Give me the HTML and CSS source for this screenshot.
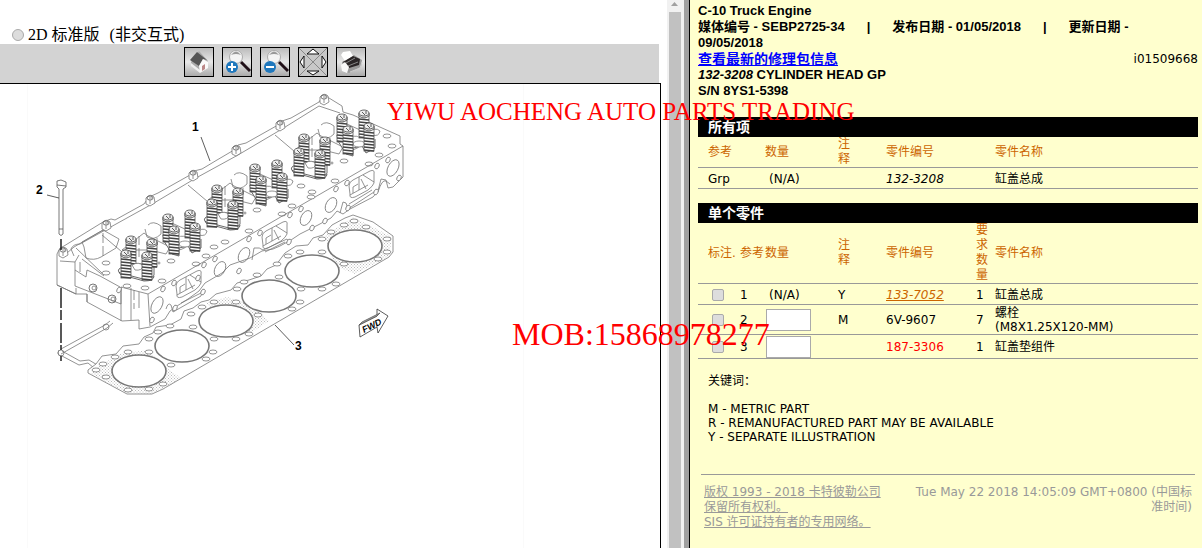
FILE: index.html
```
<!DOCTYPE html>
<html lang="zh-CN">
<head>
<meta charset="utf-8">
<title>132-3208 CYLINDER HEAD GP</title>
<link rel="stylesheet" href="styles.css">
</head>
<body>
<div class="frames">
<main class="viewer">
  <label class="mode"><input type="radio" name="mode"> <span>2D 标准版</span><span class="mode-note">(非交互式)</span></label>
  <div class="toolbar">
    <button aria-label="主页"><svg viewBox="0 0 28 28"><path d="M6 14L14 3L23 13L15 24L6 17Z" fill="#aaa"/><path d="M6 15L15 22L15 25L6 18Z" fill="#eee"/><path d="M12 4L22 12L18 11L14 18L5 12Z" fill="#555"/><path d="M14 18L18 11L23 14V20L15 25Z" fill="#fafafa"/><path d="M17 18L20 16V21L17 23Z" fill="#b88"/></svg></button>
    <button aria-label="放大"><svg viewBox="0 0 28 28"><circle cx="13" cy="9" r="6.5" fill="#f4f4f4" stroke="#aaa"/><path d="M8 7Q13 0 18 7Q13 5 8 7" fill="#999"/><path d="M18 14L27 23" stroke="#201018" stroke-width="3"/><circle cx="9" cy="19" r="6" fill="#1f78bd"/><path d="M5 19H13M9 15V23" stroke="#fff" stroke-width="2"/></svg></button>
    <button aria-label="缩小"><svg viewBox="0 0 28 28"><circle cx="13" cy="9" r="6.5" fill="#f4f4f4" stroke="#aaa"/><path d="M8 7Q13 0 18 7Q13 5 8 7" fill="#999"/><path d="M18 14L27 23" stroke="#201018" stroke-width="3"/><circle cx="9" cy="19" r="6" fill="#1f78bd"/><path d="M5 19H13" stroke="#fff" stroke-width="2"/></svg></button>
    <button class="pan" aria-label="平移"><svg viewBox="0 0 28 28"><path d="M0 0L28 28M28 0L0 28" stroke="#888"/><path d="M14 1L20 6H8ZM14 27L20 23H8ZM1 14L5 8V20ZM27 14L23 8V20Z" fill="#fff" stroke="#111"/></svg></button>
    <button aria-label="打印"><svg viewBox="0 0 28 28"><path d="M5 14L17 7L25 12L24 19L12 25L5 22Z" fill="#999"/><path d="M4 7L6 4L13 3L16 8L8 13Z" fill="#fff"/><path d="M6 14L16 8L23 11L22 17L12 20Z" fill="#2a2526"/><path d="M9 15L18 10M11 18L21 14" stroke="#888"/><path d="M4 17L8 14L12 19L10 25L5 23Z" fill="#f8f8f8"/><path d="M13 24L23 20L25 14" fill="none" stroke="#ccc"/></svg></button>
  </div>
  <div class="drawing">
    <svg class="figure" viewBox="0 84 660 464" width="660" height="464" fill="none" stroke="#777" stroke-width=".8">
      <defs>
        <g id="spring">
          <rect x="-5" y="2" width="10" height="24" fill="#fff" stroke="#555"/>
          <path d="M-5 7L5 8M-5 10L5 11M-5 13L5 14M-5 16L5 17M-5 19L5 20M-5 22L5 23M-5 25L5 26" stroke="#444" stroke-width="1.4"/>
          <path d="M-5 1V4Q0 8 5 4V1" fill="#ddd" stroke="#444"/>
          <ellipse cy="1" rx="5" ry="3" fill="#eee" stroke="#444"/>
          <path d="M-2 0L1 3M2-1V2" stroke="#333"/>
        </g>
        <g id="set-a">
          <path d="M-7 17Q-9 19-6 21L17 27Q27 27 28 23V15L16 12L2 11Z" fill="#fff" stroke="#444"/>
          <path d="M-7 20Q-6 24 0 24L18 29Q28 29 28 24" stroke="#444"/>
          <use href="#spring" x="5" y="-14"/><use href="#spring" x="26" y="-11"/>
          <path d="M6 13Q13 9 17 14Q16 19 9 18Z" fill="#fff"/>
          <use href="#spring"/><use href="#spring" x="21" y="2"/>
        </g>
        <g id="set-b">
          <path d="M-11 7L-10 13L-2 26L5 28V20L14 18L18 25L27 20V11" fill="#fff" stroke="#444"/>
          <use href="#spring" x="-6" y="-12"/><use href="#spring" x="16" y="-16"/>
          <ellipse cx="11" cy="16" rx="6" ry="3" fill="#fff"/>
          <use href="#spring"/><use href="#spring" x="21" y="-3"/>
        </g>
        <g id="boss">
          <path d="M-4 5L-4-1Q0-6 4-2L5 4L0 7Z" fill="#fff"/><ellipse cy="-1" rx="3" ry="2" stroke="#555"/><path d="M-1-1H2M0 1V5"/>
        </g>
        <g id="bay">
          <path d="M18 17L40 0L44 3L66 14L62 21L46 17Z"/>
          <path d="M35 3V26" stroke-dasharray="9 3"/>
          <path d="M63-14V6" stroke-dasharray="7 3"/>
          <path d="M-2 2L24 24M61-13L92 1Q98-7 103-2Q102 4 95 2"/>
          <path d="M41-4L43 4Q50 8 57 1V-7Q49-13 44-8M47 6V12Q50 15 53 12V5"/>
          <path d="M72 8Q76 0 83 5L87 15M69 12Q78 6 84 12Q77 19 70 16Z"/>
          <ellipse cx="40" cy="35" rx="4" ry="2"/><ellipse cx="92" cy="31" rx="4" ry="2"/><circle cx="55" cy="30" r="1"/>
        </g>
        <g id="port">
          <path d="M-13 1Q-13-3-9-5L8-14Q13-16 12-11L12-2Q11 1 6 5L-7 12Q-13 14-12 9Z"/><path d="M-12 10L-3 5V-8M12-3L1-10M-3 5L6 0M-4-1L-9 2V8M-1-6L4 4"/>
        </g>
        <pattern id="dots" width="3" height="3" patternUnits="userSpaceOnUse"><path d="M0 .5H1M1.500 2H2.500" stroke="#aaa"/></pattern>
      </defs>
      <path class="faint" d="M27.500 84V548M523.500 84V548"/>
      <!-- head gasket -->
      <path d="M61 349L105 325L110 321M61 354L107 328L113 323M59 350Q56 355 62 356L79 365L88 363L94 368M62 351L80 361L89 360L99 366" fill="none"/>
      <circle cx="106" cy="327" r="3"/><circle cx="61" cy="353" r="3"/>
      <path d="M88 370L96 364L102 356L116 354L123 346L139 344L144 337L153 333L156 327L170 325L181 319L184 311L193 308L201 302L209 300L216 294L231 290L237 283L249 280L261 276L267 269L276 265L285 253L296 246L308 245L313 238L323 235L332 225L345 218L353 215L373 222L393 236V252L389 257L163 389L152 394H127L88 373Z" fill="#fff"/>
      <path d="M95 368L120 354L148 350L168 369L181 378L165 389L150 394L127 393L91 374Z" fill="url(#dots)" stroke="none"/>
      <path d="M205 303L227 297L250 304L269 321L251 333L205 303M325 236L353 217L392 237L389 256L355 274L335 266Z" fill="url(#dots)" stroke="none"/>
      <g class="bores">
        <ellipse cx="139" cy="371" rx="27" ry="16"/><ellipse cx="182" cy="346" rx="27" ry="16"/><ellipse cx="226" cy="321" rx="27" ry="16"/><ellipse cx="269" cy="296" rx="27" ry="16"/><ellipse cx="312" cy="271" rx="27" ry="16"/><ellipse cx="355" cy="246" rx="27" ry="16"/>
      </g>
      <g id="gasket-holes" fill="#fff"></g>
      <!-- cylinder head casting -->
      <path d="M57 285V254L60 248L64 246L103 222L111 219L115 220L144 204L149 197L158 193L174 184L190 175L194 171L202 169L217 160L234 150L238 145L246 143L278 125L282 121L291 118L319 102L323 96L329 98L342 106L343 112L353 115L400 136V144L403 146V177L393 187L388 188L386 180L381 179L378 191L373 197L350 209L343 214L337 211L331 218L318 225L310 229L300 234L291 240L280 246L273 249L262 251L250 258L230 265L222 273L205 283L199 291L188 299L177 306L170 311L165 319L150 327L139 329V320L122 321L87 302V294L76 294Z" fill="#fff"/>
      <path d="M60 261L75 262L75 286L121 304V287L148 294L403 146M87 294V302M148 294L150 326M121 287V321M131 288V320M139 292V308M75 270L86 277L87 270L100 276L120 287M75 262L79 255M57 285L76 294V288"/>
      <path d="M67 253L74 247L110 226M74 256L71 249Q73 244 80 244L154 203L196 178L238 155L282 129L319 106L340 113M82 259L104 276M76 248L103 274"/>
      <path d="M84 247L86 258Q94 261 101 257L116 248L119 239L103 230L82 242Z"/>
      <path d="M103 233V258M80 262V272M134 290V309" stroke-dasharray="10 3"/>
      <use href="#bay" x="104" y="233"/><use href="#bay" x="190" y="183"/><use href="#bay" x="277" y="133"/>
      <use href="#boss" x="63" y="251"/><use href="#boss" x="106" y="224"/><use href="#boss" x="150" y="199"/><use href="#boss" x="193" y="174"/><use href="#boss" x="236" y="149"/><use href="#boss" x="280" y="124"/><use href="#boss" x="324" y="98"/>
      <use href="#port" x="189" y="285"/><use href="#port" x="275" y="236"/><use href="#port" x="362" y="185"/>
      <g>
        <ellipse cx="157" cy="305" rx="5" ry="9" transform="rotate(28 157 305)"/><ellipse cx="220" cy="269" rx="5" ry="8" transform="rotate(28 220 269)"/><ellipse cx="244" cy="255" rx="5" ry="8" transform="rotate(28 244 255)"/><ellipse cx="306" cy="218" rx="5" ry="8" transform="rotate(28 306 218)"/><ellipse cx="331" cy="205" rx="5" ry="8" transform="rotate(28 331 205)"/><ellipse cx="393" cy="168" rx="5" ry="9" transform="rotate(28 393 168)"/>
        <circle cx="93" cy="288" r="4" stroke="#555"/><circle cx="94" cy="288" r="2"/><circle cx="112" cy="299" r="4" stroke="#555"/><circle cx="113" cy="299" r="2"/>
      </g>
      <path d="M166 309Q168 302 171 305L173 312L201 296L202 291M181 303L201 293M252 260L254 248Q260 247 263 250L287 239L290 243M265 252L285 242M340 213L343 202L346 203L348 209L374 192M349 204L372 190M378 192Q382 179 386 181L390 184"/>
      <g id="head-holes" fill="#fff"></g>
      <use href="#set-b" x="348" y="128"/><use href="#set-a" x="299" y="150"/><use href="#set-b" x="261" y="178"/><use href="#set-a" x="212" y="201"/><use href="#set-b" x="174" y="228"/><use href="#set-a" x="126" y="252"/>
      <!-- bolt -->
      <path d="M57 181L61 180L66 182V187L63 189V234Q61 237 59 234V189L57 187ZM57 185L66 186M59 229H63" fill="#fff" stroke="#555"/>
      <path d="M61 239V250M61 288V320M61 323V350M61 356V361" stroke="#222" stroke-width="1.500" stroke-dasharray="20 2"/>
      <path d="M201 137L210 161M47 195L59 198M275 325L294 345" stroke="#333"/>
      <path d="M359 325L377 316V309L388 316L378 333L377 327L360 337Z" fill="#fff" stroke="#333"/>
      <path d="M359 325L362 322L380 313L377 316Z" fill="#aaa" stroke="#555"/>
      <g class="callouts"><text x="192" y="131">1</text><text x="36" y="194">2</text><text x="295" y="350">3</text><text class="fwd" transform="translate(364 333) rotate(-27)">FWD</text></g>
    </svg>
  </div>
</main>
<div class="scroll"><svg viewBox="0 0 15 12"><path d="M4 6L7.500 2L11 6Z" fill="#a0a0a0"/></svg><div class="thumb"></div></div>
<div class="splitter"></div>
<aside class="details">
  <header class="meta">
    <div>C-10 Truck Engine</div>
    <div class="media"><span>媒体编号 - SEBP2725-34</span><i>|</i><span>发布日期 - 01/05/2018</span><i>|</i><span>更新日期 -</span></div>
    <div>09/05/2018</div>
    <div class="kit"><a href="#">查看最新的修理包信息</a><span>i01509668</span></div>
    <div><em>132-3208</em> CYLINDER HEAD GP</div>
    <div>S/N 8YS1-5398</div>
  </header>
  <h2>所有项</h2>
  <table class="all">
    <colgroup><col class="c-ref-wide"><col class="c-qty"><col class="c-note"><col class="c-part"><col></colgroup>
    <thead><tr><th>参考</th><th>数量</th><th>注<br>释</th><th>零件编号</th><th>零件名称</th></tr></thead>
    <tbody><tr><td>Grp</td><td class="na">(N/A)</td><td></td><td><em>132-3208</em></td><td>缸盖总成</td></tr></tbody>
  </table>
  <h2>单个零件</h2>
  <table class="single">
    <colgroup><col class="c-mark"><col class="c-ref"><col class="c-qty"><col class="c-note"><col class="c-part-short"><col class="c-req"><col></colgroup>
    <thead><tr><th>标注.</th><th>参考</th><th>数量</th><th>注<br>释</th><th>零件编号</th><th>要<br>求<br>数<br>量</th><th>零件名称</th></tr></thead>
    <tbody>
      <tr><td class="pick"><input type="checkbox" aria-label="标注 1"></td><td>1</td><td class="na">(N/A)</td><td>Y</td><td><a class="part" href="#">133-7052</a></td><td>1</td><td>缸盖总成</td></tr>
      <tr><td class="pick"><input type="checkbox" aria-label="标注 2"></td><td>2</td><td><input type="text" aria-label="数量 2"></td><td>M</td><td>6V-9607</td><td>7</td><td>螺栓<br>(M8X1.25X120-MM)</td></tr>
      <tr><td class="pick"><input type="checkbox" aria-label="标注 3"></td><td>3</td><td><input type="text" aria-label="数量 3"></td><td></td><td class="alert">187-3306</td><td>1</td><td>缸盖垫组件</td></tr>
    </tbody>
  </table>
  <section class="keys">
    <p>关键词：</p>
    <div>M - METRIC PART</div><div>R - REMANUFACTURED PART MAY BE AVAILABLE</div><div>Y - SEPARATE ILLUSTRATION</div>
  </section>
  <footer>
    <div><a href="#">版权 1993 - 2018 卡特彼勒公司<br>保留所有权利。</a><br><a href="#">SIS 许可证持有者的专用网络。</a></div>
    <div class="stamp">Tue May 22 2018 14:05:09 GMT+0800 (中国标<br>准时间)</div>
  </footer>
</aside>
</div>
<div class="mark company">YIWU AOCHENG AUTO PARTS TRADING</div>
<div class="mark phone">MOB:15868978277</div>
<script src="holes.js"></script>
</body>
</html>
```
FILE: styles.css
```
* { box-sizing: border-box; }
body { margin: 0; color: #000; background: #fff; font: 12px/14px "DejaVu Sans", "Noto Sans CJK SC", sans-serif; }
.frames { display: flex; height: 100vh; overflow: hidden; }
.viewer { flex: 1; min-width: 0; display: flex; flex-direction: column; padding-right: 6px; }
.mode { display: flex; align-items: center; height: 44px; padding: 26px 0 0 12px; font: 16px/18px "Liberation Serif", "Noto Sans CJK SC", serif; }
.mode input { appearance: none; width: 12px; height: 12px; margin: 0 4px 0 0; border: 1px solid #aaa; border-radius: 50%; background: #ddd; }
.mode-note { padding-left: 10px; }
.toolbar { display: flex; gap: 8px; height: 39px; margin-right: 2px; padding: 3px 0 0 184px; background: #d3d3d3; }
.toolbar button { width: 30px; height: 30px; padding: 0; border: 1px solid #000; background: linear-gradient(#bbb, #e8e8e8 50%, #aaa); }
.toolbar .pan { background: #c8c8c8; }
.toolbar svg { display: block; width: 28px; height: 28px; }
.drawing { flex: 1; min-height: 0; overflow: hidden; border: solid #000; border-width: 1px 1px 0 0; }
.figure { display: block; }
.faint { stroke: #f9f9f9; }
.bores { fill: #fff; stroke: #777; stroke-width: 1.6; }
.callouts { fill: #000; stroke: none; font: bold 12px "Liberation Sans", sans-serif; }
.callouts .fwd { font-size: 9px; font-style: italic; }
.scroll { width: 15px; display: flex; flex-direction: column; background: #f1f1f1; }
.scroll svg { display: block; height: 12px; }
.thumb { flex: 1; background: #c1c1c1; margin: 0 1px 0 2px; }
.splitter { width: 8px; background: #a0a0a0; border-left: 2px solid #f1f1f1; border-right: 1px solid #000; }
.details { width: 512px; padding: 3px 4px 0 8px; background: #ffffce; }
.meta { margin-bottom: 18px; font: bold 13px/16px "Liberation Sans", "Noto Sans CJK SC", sans-serif; }
.media { display: flex; gap: 22px; }
.media i { font-style: normal; }
.meta > div { height: 16px; white-space: nowrap; }
.kit { display: flex; justify-content: space-between; font-size: 14px; }
.kit a { color: #00f; }
.kit span { font: 12px/16px "DejaVu Sans", sans-serif; }
h2 { margin: 0; height: 20px; padding-left: 10px; color: #fff; background: #000; font: bold 14px/20px "Liberation Sans", "Noto Sans CJK SC", sans-serif; }
table { width: 100%; border-collapse: collapse; table-layout: fixed; }
.all { margin-bottom: 14px; }
th, td { padding: 0; text-align: left; font-weight: normal; border-bottom: 1px solid #999; white-space: nowrap; }
th { color: #cc6500; line-height: 15px; }
tr > :first-child { padding-left: 10px; }
td { height: 21px; padding-top: 1px; }
.c-ref-wide { width: 67px; }
.c-mark { width: 42px; }
.c-ref { width: 25px; }
.c-qty { width: 73px; }
.c-note { width: 48px; }
.c-part { width: 109px; }
.c-part-short { width: 90px; }
.c-req { width: 19px; }
td.na { padding-left: 4px; }
tr > .pick { padding-left: 14px; }
input[type="checkbox"] { appearance: none; display: block; width: 12px; height: 12px; margin: 0; border: 1px solid #aaa; border-radius: 2px; background: #ddd; }
input[type="text"] { display: block; width: 45px; height: 22px; margin: 0 0 0 1px; padding: 0; border: 1px solid #aaa; background: #fff; }
.part { color: #cc6500; font-style: italic; }
.alert { color: #f00; }
.keys { margin: 15px 10px 30px; }
.keys p { margin: 0 0 14px; }
footer { display: flex; justify-content: space-between; margin: 0 3px; padding: 10px 3px 0; border-top: 1px solid #999; color: #999; line-height: 15px; }
footer a { color: #999; }
.stamp { text-align: right; }
.mark { position: absolute; color: #f00; white-space: nowrap; font-family: "Liberation Serif", serif; pointer-events: none; }
.company { left: 387px; top: 98px; font-size: 25px; line-height: 28px; }
.phone { left: 512px; top: 316px; font-size: 32px; line-height: 36px; }
```
FILE: holes.js
```
const NS = "http://www.w3.org/2000/svg";
function drill(id, points, rx, ry, tilt) {
  const group = document.getElementById(id);
  for (const [x, y] of points) {
    const hole = document.createElementNS(NS, "ellipse");
    hole.setAttribute("cx", x);
    hole.setAttribute("cy", y);
    hole.setAttribute("rx", rx);
    hole.setAttribute("ry", ry);
    if (tilt) hole.setAttribute("transform", `rotate(${tilt} ${x} ${y})`);
    group.appendChild(hole);
  }
}
drill("gasket-holes", [
  [128,352],[115,357],[103,364],[96,370],[106,377],[128,390],[149,389],[163,384],[171,365],[149,352],
  [149,339],[158,332],[170,326],[191,314],[193,327],[202,307],[214,302],[236,302],[237,289],[244,282],
  [257,275],[206,359],[213,352],[214,339],[236,339],[249,334],[258,315],[292,309],[300,302],[301,289],
  [279,277],[277,264],[288,256],[300,252],[322,252],[322,239],[331,232],[344,264],[336,284],[322,289],
  [378,259],[387,252],[387,239],[344,225],[354,221],[366,227]
], 4, 2);
drill("head-holes", [
  [163,289],[174,283],[204,265],[215,259],[249,239],[260,233],[290,215],[301,209],[336,189],[347,183],[377,166],[388,160],
  [152,320],[198,278],[239,271],[312,228],[325,221],[399,178],[175,308],[203,292],[289,242],[348,208],[376,192],[119,290]
], 2, 3, 28);
drill("head-holes", [
  [106,273],[127,286],[145,288],[162,281],[214,247],[225,242],[249,231],[257,210],[292,206],[344,161],[311,197],[335,181],
  [301,186],[312,192],[387,136],[392,146],[379,155],[106,263],[171,261],[206,256]
], 4, 2);
```
